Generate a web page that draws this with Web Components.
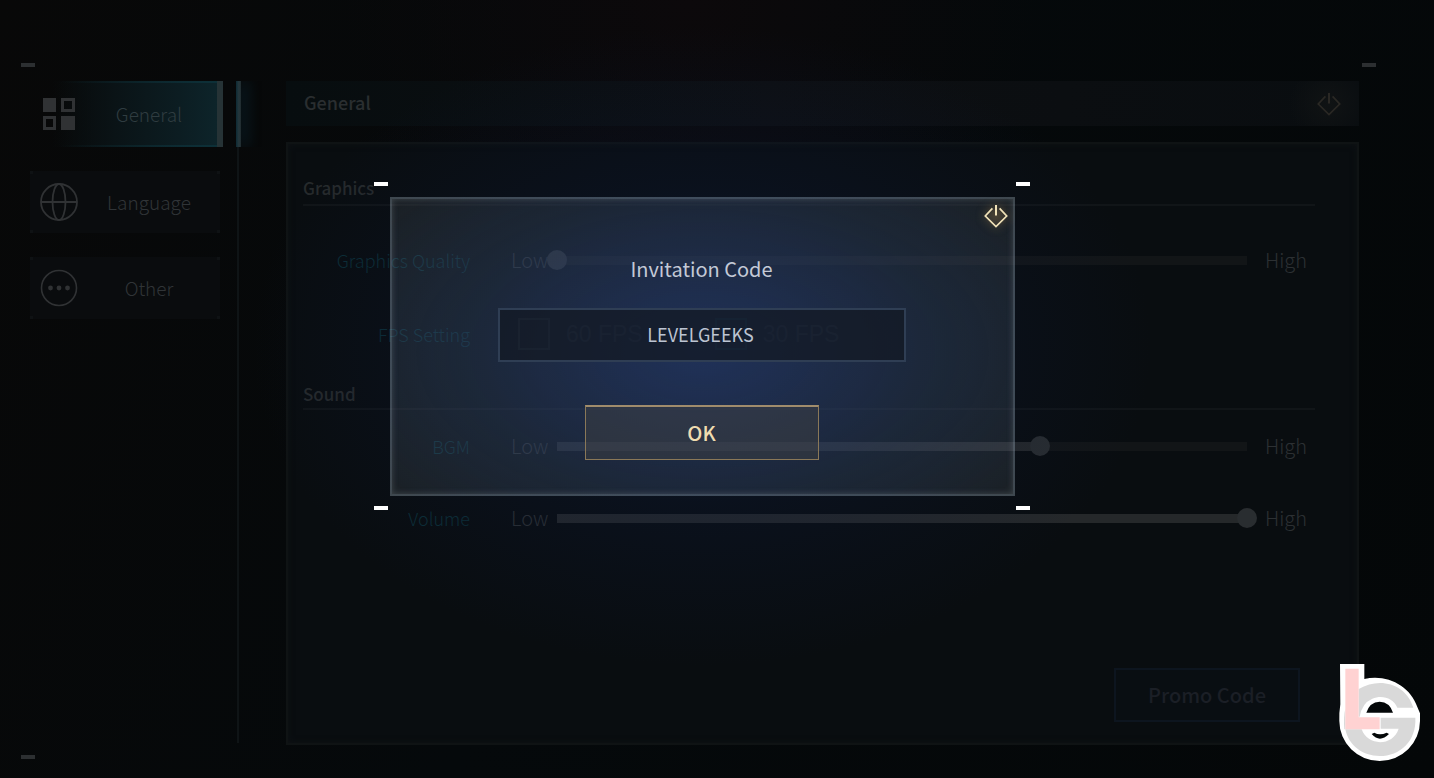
<!DOCTYPE html>
<html lang="en">
<head>
<meta charset="utf-8">
<title>Settings</title>
<style>
  html, body { margin: 0; height: 100%; background: #050809; }
  body { font-family: "Noto Sans CJK SC", "Noto Sans", sans-serif; color: #2a2e31; }
</style>
</head>
<body>
<settings-screen>
  <side-nav slot="nav">
    <nav-item icon="grid" active>General</nav-item>
    <nav-item icon="globe">Language</nav-item>
    <nav-item icon="dots">Other</nav-item>
  </side-nav>
  <settings-panel slot="main" heading="General">
    <settings-section heading="Graphics" spaced>
      <slider-row label="Graphics Quality" value="0"></slider-row>
      <choice-row label="FPS Setting" options="60 FPS,30 FPS"></choice-row>
    </settings-section>
    <settings-section heading="Sound">
      <slider-row label="BGM" value="70"></slider-row>
      <slider-row label="Volume" value="100"></slider-row>
    </settings-section>
  </settings-panel>
  <code-dialog slot="overlay" heading="Invitation Code" value="LEVELGEEKS"></code-dialog>
  <brand-mark slot="brand"></brand-mark>
</settings-screen>

<script>
const POWER = `<svg viewBox="0 0 24 24" width="24" height="24" fill="none" stroke="currentColor" stroke-width="1.7" aria-hidden="true">
  <path d="M8.4 4.4 1.3 12 12 22.6 22.7 12 15.6 4.4"/><path d="M12 1v10.500" stroke-width="2"/></svg>`;

const ICONS = {
  grid: `<svg viewBox="0 0 40 40" width="40" height="40" aria-hidden="true"><g fill="currentColor">
    <path d="M4 4h13v14H4zM22 22h14v14H22z"/>
    <path fill-rule="evenodd" d="M22 4h14v14H22zM25 7v8h8V7zM4 22h13v14H4zM7 25v8h7v-8z"/></g></svg>`,
  globe: `<svg viewBox="0 0 40 40" width="40" height="40" fill="none" stroke="currentColor" stroke-width="1.800" aria-hidden="true">
    <circle cx="20" cy="20" r="18"/><ellipse cx="20" cy="20" rx="6.500" ry="18"/><path d="M2 20h36"/></svg>`,
  dots: `<svg viewBox="0 0 40 40" width="40" height="40" aria-hidden="true">
    <circle cx="20" cy="20" r="17.500" fill="none" stroke="currentColor" stroke-width="1.600"/>
    <g fill="currentColor"><circle cx="11.500" cy="20" r="2.400"/><circle cx="20" cy="20" r="2.400"/><circle cx="28.500" cy="20" r="2.400"/></g></svg>`
};

class Base extends HTMLElement {
  connectedCallback() {
    if (this.shadowRoot) return;
    this.attachShadow({ mode: "open" }).innerHTML =
      `<style>*{box-sizing:border-box}:host{display:block;box-sizing:border-box}button,input{font-family:inherit;margin:0}</style>` + this.render();
  }
  attr(name) { return this.getAttribute(name) || ""; }
}

customElements.define("settings-screen", class extends Base {
  render() {
    return `<style>
      :host { position: relative; min-height: 100%; display: flex; overflow: hidden;
        background: radial-gradient(circle at 48% 0, #0c090b, transparent 32%), linear-gradient(115deg, #080808, #05090b 45%, #040708); }
      .layout { flex: 1; display: grid; grid-template-columns: 209px 1fr; gap: 47px; padding: 81px 75px 33px 30px; }
      .glow { position: absolute; inset: 0; pointer-events: none;
        background: radial-gradient(ellipse 450px 320px at calc(50% - 15px) 346px, rgba(18,36,86,.5), rgba(14,28,64,.26) 50%, transparent); }
      .dash { position: absolute; width: 14px; height: 4px; background: #2c2f31; }
      .tl { left: 21px; top: 63px; } .tr { right: 58px; top: 63px; } .bl { left: 21px; bottom: 19px; }
    </style>
    <div class="layout"><slot name="nav"></slot><slot name="main"></slot></div>
    <div class="glow"></div>
    <i class="dash tl"></i><i class="dash tr"></i><i class="dash bl"></i>
    <slot name="overlay"></slot><slot name="brand"></slot>`;
  }
});

customElements.define("side-nav", class extends Base {
  render() {
    return `<style>
      :host { position: relative; border-right: 2px solid #0f1416; padding-right: 15px; margin-bottom: 2px; }
      nav { display: flex; flex-direction: column; gap: 24px; }
      .mark { position: absolute; right: -4px; top: 0; width: 5px; height: 66px; background: linear-gradient(90deg, #0d2a34, #26383d 60%, #202a2e);
        box-shadow: 5px 0 14px rgba(14,62,84,.6); clip-path: inset(0 -30px 0 0); }
    </style><nav aria-label="Settings"><slot></slot></nav><span class="mark"></span>`;
  }
});

customElements.define("nav-item", class extends Base {
  render() {
    const on = this.hasAttribute("active");
    return `<style>
      button { display: grid; grid-template-columns: 58px 1fr; align-items: center; width: calc(100% - 2px); height: 62px; padding: 0 10px 0 0; border: 0;
        font-size: 19px; font-weight: 300; line-height: 28px; color: #303437; text-align: center;
        background: linear-gradient(#0f1214,#0f1214) 0 0/3px 3px no-repeat, linear-gradient(#0f1214,#0f1214) 100% 0/3px 3px no-repeat,
          linear-gradient(#0f1214,#0f1214) 0 100%/3px 3px no-repeat, linear-gradient(#0f1214,#0f1214) 100% 100%/3px 3px no-repeat, #0a0c0e; }
      button.on { height: 66px; width: calc(100% + 1px); border-right: 6px solid #263336; padding-right: 7px; color: #2f3c40;
        background: linear-gradient(90deg, transparent 16%, #0d3038) 0 0/100% 2px no-repeat, linear-gradient(90deg, transparent 16%, #0d3038) 0 100%/100% 2px no-repeat,
          linear-gradient(90deg, transparent 12%, #0a1316 45%, #0c1d22 80%, #0d242a); }
      .ico { display: grid; place-items: center; color: #303234; }
      svg { display: block; }
    </style><button type="button" class="${on ? "on" : ""}"${on ? ' aria-current="page"' : ""}><span class="ico">${ICONS[this.attr("icon")]}</span><span><slot></slot></span></button>`;
  }
});

customElements.define("settings-panel", class extends Base {
  render() {
    return `<style>
      :host { display: flex; flex-direction: column; gap: 16px; min-width: 0; }
      header { display: flex; align-items: center; justify-content: space-between; height: 45px; padding: 0 18px;
        background: radial-gradient(circle at calc(100% - 30px) 50%, #101314, transparent 40px), linear-gradient(90deg, #070d0f, #0d0f12 45%, #090d10); }
      h1 { margin: 0; padding-bottom: 3px; font-size: 18px; line-height: 24px; font-weight: 500; color: #2a2e30; }
      .power { border: 0; padding: 0; background: none; color: #2a2824; width: 24px; height: 24px; }
      svg { display: block; }
      .body { flex: 1; display: flex; flex-direction: column; border: 2px solid #0f1314; background: #090d10; padding: 20px 42px 21px 15px;
        box-shadow: inset 0 0 6px #0f1315; }
      .promo { margin: auto 15px 0 auto; width: 186px; height: 54px; border: 2px solid #0d151f; background: #090e12; color: #1b1f26;
        font-size: 20px; line-height: 28px; font-weight: 500; }
    </style>
    <header><h1>${this.attr("heading")}</h1><button class="power" type="button" aria-label="Close settings">${POWER}</button></header>
    <div class="body"><slot></slot><button class="promo" type="button">Promo Code</button></div>`;
  }
});

customElements.define("settings-section", class extends Base {
  render() {
    return `<style>
      h2 { margin: 0; height: 38px; display: flex; align-items: end; padding-bottom: 2px; border-bottom: 2px solid #111518;
        font-size: 17px; line-height: 24px; font-weight: 500; color: #262a2c; }
      :host([spaced]) h2 { height: 42px; padding-bottom: 4px; }
      :host([spaced]) .rows { padding-top: 18px; }
    </style><h2>${this.attr("heading")}</h2><div class="rows"><slot></slot></div>`;
  }
});

const ROW = `
  .row { display: grid; grid-template-columns: 167px 1fr; column-gap: 41px; align-items: center; height: 72px; }
  .name { text-align: right; font-size: 18px; line-height: 28px; font-weight: 300; color: #0c2e36; white-space: nowrap; }
`;

customElements.define("slider-row", class extends Base {
  render() {
    const v = this.attr("value");
    return `<style>${ROW}
      .row { height: 72px; }
      .scale { display: grid; grid-template-columns: 36px 1fr 58px; align-items: center; font-size: 20px; line-height: 28px; font-weight: 300; color: #2c3033; }
      .scale span:last-child { padding-left: 8px; }
      .scale span { white-space: nowrap; }
      input { appearance: none; -webkit-appearance: none; width: 100%; height: 20px; background: none; position: relative; }
      input::-webkit-slider-runnable-track { height: 20px;
        background: linear-gradient(90deg, #25282a var(--fill), #121517 var(--fill)) center / calc(100% - 20px) 9px no-repeat; }
      input::-webkit-slider-thumb { -webkit-appearance: none; width: 20px; height: 20px; border-radius: 50%; background: #292d30; }
    </style>
    <div class="row"><label class="name" for="s">${this.attr("label")}</label>
    <div class="scale"><span>Low</span><input id="s" type="range" min="0" max="100" value="${v}" style="--fill:${v}%"><span>High</span></div></div>`;
  }
});

customElements.define("choice-row", class extends Base {
  render() {
    return `<style>${ROW}
      .row { height: 76px; }
      .choices { display: flex; gap: 72px; padding-left: 7px; font: 23px/28px "Liberation Sans", sans-serif; color: #33373b; }
      .choices label { display: flex; align-items: center; gap: 16px; white-space: nowrap; }
      input { appearance: none; -webkit-appearance: none; width: 32px; height: 32px; border: 2px solid #33373b; }
      input:checked { border-color: #0d3a44; }
    </style>
    <div class="row" role="radiogroup" aria-labelledby="n"><span class="name" id="n">${this.attr("label")}</span>
    <div class="choices">${this.attr("options").split(",").map((o, i) =>
      `<label><input type="radio" name="c"${i ? " checked" : ""}>${o}</label>`).join("")}</div></div>`;
  }
});

customElements.define("code-dialog", class extends Base {
  render() {
    return `<style>
      :host { position: absolute; inset: 0; display: flex; justify-content: center; align-items: start; padding: 197px 29px 0 0; }
      .box { position: relative; width: 625px; display: flex; flex-direction: column; align-items: center; padding: 56px 22px 34px 20px;
        border: 2px solid rgba(150,165,180,.3); box-shadow: inset 0 0 6px rgba(180,190,200,.25);
        background: radial-gradient(ellipse 65% 75% at 50% 52%, rgba(34,66,140,.32), rgba(30,60,110,.18) 60%, transparent), rgba(170,175,180,.115); }
      h2 { margin: 0 0 25px; font-size: 20px; line-height: 28px; font-weight: 400; color: #c3c9d6; }
      input { width: 408px; height: 54px; border: 2px solid #2f3e54; padding: 0 2px 2px 0; text-align: center; font-size: 18px; line-height: 28px;
        color: #bcc4d2; background: rgba(18,25,36,.76); border-radius: 0; outline: 0; }
      .ok { margin-top: 43px; width: 234px; height: 55px; border: 1px solid #8a7858; border-top: 2px solid #a08c6c; background: rgba(66,66,66,.45);
        font-size: 20px; line-height: 28px; font-weight: 500; color: #efdcb0; }
      .close { position: absolute; right: 5px; top: 5px; width: 24px; height: 24px; padding: 0; border: 0; background: radial-gradient(circle, rgba(120,100,70,.25), transparent 70%);
        color: #f0e2b8; filter: drop-shadow(0 0 5px rgba(168,131,74,.7)); }
      svg { display: block; }
      .dash { position: absolute; width: 14px; height: 4px; background: #fff; }
      .l { left: -18px; } .r { right: -17px; } .t { top: -17px; } .b { bottom: -16px; }
    </style>
    <form class="box" role="dialog" aria-labelledby="t">
      <h2 id="t">${this.attr("heading")}</h2>
      <input type="text" aria-labelledby="t" value="${this.attr("value")}">
      <button class="ok" type="button">OK</button>
      <button class="close" type="button" aria-label="Close">${POWER}</button>
      <i class="dash l t"></i><i class="dash r t"></i><i class="dash l b"></i><i class="dash r b"></i>
    </form>`;
  }
});

customElements.define("brand-mark", class extends Base {
  render() {
    return `<style>:host { position: absolute; right: 12px; bottom: 15px; } svg { display: block; }</style>
    <svg width="84" height="101" viewBox="748 68 252 303" role="img" aria-label="LG">
      <path fill="#fff" fill-rule="evenodd" d="M754 74H827V119C895 103 965 140 986 203L994 222V245A121 120 0 0 1 752 245Q751 220 755 195ZM833 220H913Q903 188 873 187Q843 188 833 220ZM849 284Q873 312 901 284L894 280Q873 290 857 280Z"/>
      <path fill="#d9d9d9" d="M810 149C872 112 952 132 974 205H926C914 174 878 166 851 178Q820 191 813 232H810Z"/>
      <path fill="#d9d9d9" d="M876 235H980C984 305 934 350 873 350C821 350 780 318 770 270H819C836 320 912 323 930 268H876Z"/>
      <path fill="#d9d9d9" d="M770 207V270H767Q764 235 770 207Z"/>
      <path fill="#ffd2d2" d="M770 88H810V234H873V270H770Z"/>
    </svg>`;
  }
});
</script>
</body>
</html>
